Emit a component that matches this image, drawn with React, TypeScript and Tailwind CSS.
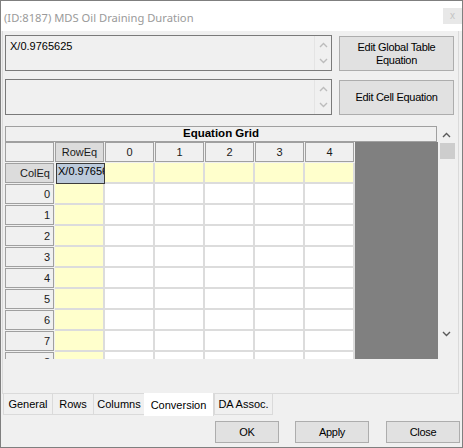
import React from 'react';

const ui = { fontFamily: '"Liberation Sans", Arial, sans-serif' };

const Chevron: React.FC<{ up?: boolean; color: string }> = ({ up, color }) => (
  <svg width="9" height="6" viewBox="0 0 9 6">
    <polyline
      points={up ? '1,5 4.5,1.5 8,5' : '1,1 4.5,4.5 8,1'}
      fill="none"
      stroke={color}
      strokeWidth="1.4"
    />
  </svg>
);

const EquationBox: React.FC<{ text?: string }> = ({ text }) => (
  <div className="w-[327px] h-[36px] border border-[#7a7a7a] bg-[#f0f0f0] flex">
    <div className="flex-1 pl-[4px] pt-[4px] text-[11px] leading-[13px] text-black">{text}</div>
    <div className="w-[17px] flex flex-col items-center justify-between py-[6px] border-l border-[#e4e4e4]">
      <Chevron up color="#bcbcbc" />
      <Chevron color="#bcbcbc" />
    </div>
  </div>
);

const WinButton: React.FC<{ className?: string; children: React.ReactNode }> = ({ className, children }) => (
  <div
    className={`bg-[#e1e1e1] border border-[#adadad] flex items-center justify-center text-center text-[11px] leading-[13px] text-black tracking-[-0.3px] ${className ?? ''}`}
  >
    {children}
  </div>
);

const columns = ['0', '1', '2', '3', '4'];
const rows = ['0', '1', '2', '3', '4', '5', '6', '7', '8'];

const HeaderBox: React.FC<{ label?: string; dark?: boolean; align?: 'center' | 'right' }> = ({
  label,
  dark,
  align = 'center',
}) => (
  <div className="w-[50px] h-[21px] pr-[1px] pb-[1px]">
    <div
      className={`h-full border border-[#a0a0a0] flex items-center text-[11px] text-[#1a1a1a] ${
        dark ? 'bg-[#dcdcdc]' : 'bg-[#f0f0f0]'
      } ${align === 'right' ? 'justify-end pr-[3px]' : 'justify-center'}`}
    >
      {label}
    </div>
  </div>
);

const DataCell: React.FC<{ yellow?: boolean }> = ({ yellow }) => (
  <div
    className={`w-[50px] h-[21px] border-r-2 border-b-2 border-[#dcdcdc] ${yellow ? 'bg-[#ffffcc]' : 'bg-white'}`}
  />
);

const EquationGrid: React.FC = () => (
  <div className="w-[433px] h-[217px] overflow-hidden flex">
    <div className="w-[350px] flex flex-col">
      <div className="flex">
        <HeaderBox />
        <HeaderBox label="RowEq" dark />
        {columns.map((c) => (
          <HeaderBox key={c} label={c} />
        ))}
      </div>
      <div className="flex">
        <HeaderBox label="ColEq" dark align="right" />
        <div className="w-[50px] h-[21px] pl-px">
          <div className="h-[21px] border border-[#3c3c3c] bg-[#bccadb] overflow-hidden whitespace-nowrap text-[11px] leading-[13px] pl-px pt-px text-black">
            X/0.9765625
          </div>
        </div>
        {columns.map((c) => (
          <DataCell key={c} yellow />
        ))}
      </div>
      {rows.map((r) => (
        <div key={r} className="flex">
          <HeaderBox label={r} align="right" />
          <DataCell yellow />
          {columns.map((c) => (
            <DataCell key={c} />
          ))}
        </div>
      ))}
    </div>
    <div className="flex-1 bg-[#808080]" />
  </div>
);

const tabs = [
  { label: 'General', w: 'w-[50px]' },
  { label: 'Rows', w: 'w-[42px]' },
  { label: 'Columns', w: 'w-[52px]' },
  { label: 'Conversion', w: 'w-[70px]', active: true },
  { label: 'DA Assoc.', w: 'w-[59px]' },
];

export default function App() {
  return (
    <div
      className="w-[463px] h-[448px] border border-[#7f7f7f] bg-[#f0f0f0] flex flex-col overflow-hidden"
      style={ui}
    >
      {/* title bar */}
      <div className="h-[30px] bg-white flex items-start justify-between shrink-0">
        <div
          className="pl-[3px] pt-[9px] text-[11.2px] leading-[16px] text-[#9a9a9a]"
          style={{ fontFamily: '"Noto Sans", "Open Sans", sans-serif' }}
        >
          (ID:8187) MDS Oil Draining Duration
        </div>
        <div className="mt-[7px] w-[19px] h-[16px] bg-[#e8e8e8] flex items-center justify-center text-[10px] leading-none text-[#c4c4c4]">
          x
        </div>
      </div>

      {/* tab page */}
      <div className="ml-px w-[457px] h-[363px] shrink-0 border-l border-r border-b border-[#dadada] pl-[2px] pt-[4px] flex flex-col">
        <div className="flex gap-[7px]">
          <EquationBox text="X/0.9765625" />
          <WinButton className="w-[115px] h-[35px] mt-px flex-col">
            <span>Edit Global Table</span>
            <span>Equation</span>
          </WinButton>
        </div>
        <div className="flex gap-[7px] mt-[8px]">
          <EquationBox />
          <WinButton className="w-[115px] h-[35px] mt-px">Edit Cell Equation</WinButton>
        </div>

        <div className="flex mt-[11px]">
          <div className="flex flex-col">
            <div className="w-[432px] h-[16px] border border-[#a0a0a0] bg-[#f0f0f0] flex items-center justify-center text-[11.5px] font-bold text-black">
              Equation Grid
            </div>
            <EquationGrid />
          </div>
          <div className="w-[17px] h-[218px] flex flex-col items-center">
            <div className="h-[17px] flex items-center justify-center">
              <Chevron up color="#5a5a5a" />
            </div>
            <div className="w-[15px] h-[16px] bg-[#cdcdcd] ml-[1px]" />
            <div className="flex-1" />
            <div className="h-[17px] flex items-center justify-center mb-[2px]">
              <Chevron color="#5a5a5a" />
            </div>
          </div>
        </div>
      </div>

      {/* tabs */}
      <div className="ml-[2px] flex items-start h-[22px] shrink-0">
        {tabs.map((t) =>
          t.active ? (
            <div
              key={t.label}
              className={`${t.w} h-[23px] -mt-px bg-white border-r border-[#dadada] flex items-center justify-center pt-[2px] text-[11px] text-black`}
            >
              {t.label}
            </div>
          ) : (
            <div
              key={t.label}
              className={`${t.w} h-[21px] border-l border-r border-b border-[#dadada] -mr-px flex items-center justify-center text-[11px] text-black`}
            >
              {t.label}
            </div>
          ),
        )}
      </div>

      {/* dialog buttons */}
      <div className="flex justify-end pr-[2px] mt-[5px]">
        <WinButton className="w-[64px] h-[22px]">OK</WinButton>
        <WinButton className="w-[74px] h-[22px] ml-[16px]">Apply</WinButton>
        <WinButton className="w-[74px] h-[22px] ml-[17px]">Close</WinButton>
      </div>
    </div>
  );
}
